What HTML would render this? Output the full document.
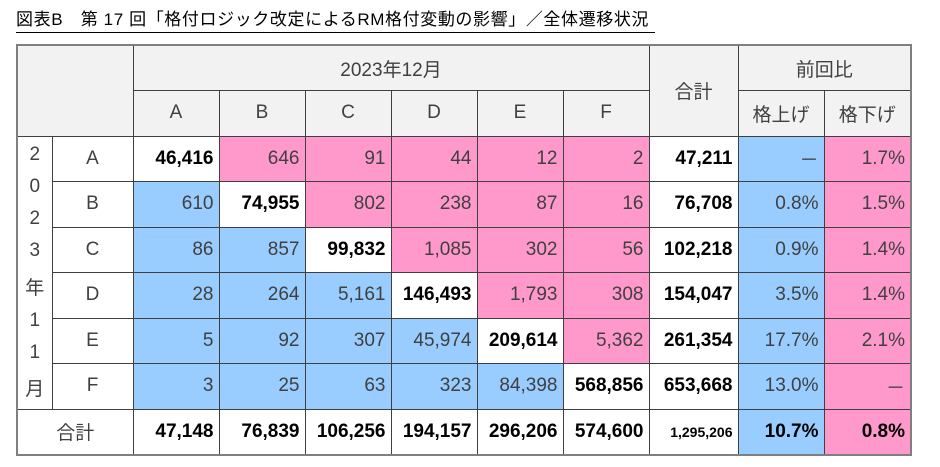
<!DOCTYPE html>
<html><head><meta charset="utf-8"><style>
body{margin:0;width:940px;height:467px;background:#fff;font-family:"Liberation Sans","Noto Sans CJK JP",sans-serif;position:relative;overflow:hidden}
.title{position:absolute;left:16px;top:9px;font-size:17px;letter-spacing:0.6px;color:#000;border-bottom:1.5px solid #000;padding-bottom:1px;white-space:nowrap;width:639px;line-height:22px;overflow:hidden}
table{position:absolute;left:16px;top:44px;border-collapse:collapse;table-layout:fixed;border:2px solid #7f7f7f}
td{border:1px solid #3f3f3f;height:45.5px;padding:0 5px;font-size:19px;color:#404040;text-align:right;box-sizing:border-box;white-space:nowrap}
.h{background:#f2f2f2;text-align:center;color:#404040}
.p{background:#ff99cc}.b{background:#99ccff}
.k{font-weight:bold;color:#000}
.c{text-align:center}
.v{background:#fff;text-align:center;vertical-align:middle;padding:0;font-size:19px}
.v div{display:flex;flex-direction:column;justify-content:space-around;height:268px;align-items:center}
</style></head><body>
<div class="title">図表B　第 17 回「格付ロジック改定によるRM格付変動の影響」／全体遷移状況</div>
<table>
<colgroup><col style="width:35px"><col style="width:81px"><col style="width:86px"><col style="width:86px"><col style="width:86px"><col style="width:86px"><col style="width:86px"><col style="width:86px"><col style="width:89px"><col style="width:86px"><col style="width:87px"></colgroup>
<tr><td class="h" colspan="2" rowspan="2"></td><td class="h" colspan="6">2023年12月</td><td class="h" rowspan="2">合計</td><td class="h" colspan="2">前回比</td></tr>
<tr><td class="h">A</td><td class="h">B</td><td class="h">C</td><td class="h">D</td><td class="h">E</td><td class="h">F</td><td class="h">格上げ</td><td class="h">格下げ</td></tr>
<tr><td class="v" rowspan="6"><div><span>2</span><span>0</span><span>2</span><span>3</span><span>年</span><span>1</span><span>1</span><span>月</span></div></td><td class="c">A</td><td class="k">46,416</td><td class="p">646</td><td class="p">91</td><td class="p">44</td><td class="p">12</td><td class="p">2</td><td class="k">47,211</td><td class="b">－</td><td class="p">1.7%</td></tr>
<tr><td class="c">B</td><td class="b">610</td><td class="k">74,955</td><td class="p">802</td><td class="p">238</td><td class="p">87</td><td class="p">16</td><td class="k">76,708</td><td class="b">0.8%</td><td class="p">1.5%</td></tr>
<tr><td class="c">C</td><td class="b">86</td><td class="b">857</td><td class="k">99,832</td><td class="p">1,085</td><td class="p">302</td><td class="p">56</td><td class="k">102,218</td><td class="b">0.9%</td><td class="p">1.4%</td></tr>
<tr><td class="c">D</td><td class="b">28</td><td class="b">264</td><td class="b">5,161</td><td class="k">146,493</td><td class="p">1,793</td><td class="p">308</td><td class="k">154,047</td><td class="b">3.5%</td><td class="p">1.4%</td></tr>
<tr><td class="c">E</td><td class="b">5</td><td class="b">92</td><td class="b">307</td><td class="b">45,974</td><td class="k">209,614</td><td class="p">5,362</td><td class="k">261,354</td><td class="b">17.7%</td><td class="p">2.1%</td></tr>
<tr><td class="c">F</td><td class="b">3</td><td class="b">25</td><td class="b">63</td><td class="b">323</td><td class="b">84,398</td><td class="k">568,856</td><td class="k">653,668</td><td class="b">13.0%</td><td class="p">－</td></tr>
<tr><td class="c" colspan="2">合計</td><td class="k">47,148</td><td class="k">76,839</td><td class="k">106,256</td><td class="k">194,157</td><td class="k">296,206</td><td class="k">574,600</td><td class="k" style="font-size:14px">1,295,206</td><td class="b k">10.7%</td><td class="p k">0.8%</td></tr>
</table>
</body></html>
